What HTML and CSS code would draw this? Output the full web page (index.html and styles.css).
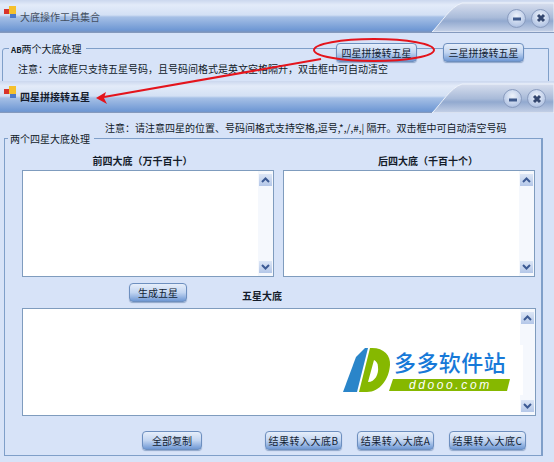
FILE: index.html
```html
<!DOCTYPE html>
<html lang="zh-CN">
<head>
    <meta charset="UTF-8">
    <title>四星拼接转五星</title>
    <link rel="stylesheet" href="styles.css">
</head>
<body>
    <!-- 后面的窗口 -->
    <div class="window back-window">
        <div class="titlebar">
            <svg class="swoosh" width="122" height="32" viewBox="0 0 122 32">
                <path d="M0 32 C10 22 18 7 30 3 L122 3 L122 32 Z" fill="url(#barGrad)" stroke="#eef3fb" stroke-width="1"/>
                <defs>
                    <linearGradient id="barGrad" x1="0" y1="0" x2="0" y2="1">
                        <stop offset="0" stop-color="#d7deee"/>
                        <stop offset="0.5" stop-color="#a9bbd9"/>
                        <stop offset="0.62" stop-color="#92a9cf"/>
                        <stop offset="1" stop-color="#c6d2e8"/>
                    </linearGradient>
                </defs>
            </svg>
            <svg class="app-icon" width="13" height="13" viewBox="0 0 13 13">
                <rect x="0" y="3" width="5" height="5" fill="#d9342b"/>
                <rect x="5" y="0" width="7" height="8" fill="#f5c02c"/>
                <rect x="6" y="8" width="6" height="4" fill="#4c78c8"/>
            </svg>
            <span class="title-text">大底操作工具集合</span>
            <span class="win-btn">
                <svg width="10" height="10" viewBox="0 0 10 10"><path d="M1 6H9" stroke="#3f5a8c" stroke-width="3"/></svg>
            </span>
            <span class="win-btn">
                <svg width="10" height="10" viewBox="0 0 10 10"><path d="M2 2L8 8M8 2L2 8" stroke="#34476f" stroke-width="3"/></svg>
            </span>
        </div>
        <div class="back-body">
            <div class="back-group">
                <span class="legend"><b class="legend-ab">AB</b>两个大底处理</span>
                <p class="back-note">注意：大底框只支持五星号码，且号码间格式是英文空格隔开，双击框中可自动清空</p>
                <div class="back-actions">
                    <button class="btn btn-wide">四星拼接转五星</button>
                    <button class="btn btn-wide">三星拼接转五星</button>
                </div>
            </div>
        </div>
    </div>

    <!-- 前面的窗口 -->
    <div class="window front-window">
        <div class="titlebar front-bar">
            <svg class="swoosh" width="122" height="32" viewBox="0 0 122 32">
                <path d="M0 32 C10 22 18 7 30 3 L122 3 L122 32 Z" fill="url(#barGrad)" stroke="#eef3fb" stroke-width="1"/>
            </svg>
            <svg class="app-icon" width="13" height="13" viewBox="0 0 13 13">
                <rect x="0" y="3" width="5" height="5" fill="#d9342b"/>
                <rect x="5" y="0" width="7" height="8" fill="#f5c02c"/>
                <rect x="6" y="8" width="6" height="4" fill="#4c78c8"/>
            </svg>
            <span class="title-text front-title">四星拼接转五星</span>
            <span class="win-btn">
                <svg width="10" height="10" viewBox="0 0 10 10"><path d="M1 6H9" stroke="#3f5a8c" stroke-width="3"/></svg>
            </span>
            <span class="win-btn">
                <svg width="10" height="10" viewBox="0 0 10 10"><path d="M2 2L8 8M8 2L2 8" stroke="#34476f" stroke-width="3"/></svg>
            </span>
        </div>
        <p class="front-note">注意：请注意四星的位置、号码间格式支持空格,逗号,*,/,#,| 隔开。双击框中可自动清空号码</p>
        <div class="group">
            <span class="legend legend-front">两个四星大底处理</span>
            <div class="box-heads">
                <h3 class="head-left">前四大底（万千百十）</h3>
                <h3 class="head-right">后四大底（千百十个）</h3>
            </div>
            <div class="box-row">
                <div class="box">
                    <div class="scrollbar">
                        <span class="arrow"><svg width="9" height="6" viewBox="0 0 9 6"><path d="M1 5L4.5 1.5L8 5" fill="none" stroke="#3c5a94" stroke-width="2"/></svg></span>
                        <span class="arrow"><svg width="9" height="6" viewBox="0 0 9 6"><path d="M1 1L4.5 4.5L8 1" fill="none" stroke="#3c5a94" stroke-width="2"/></svg></span>
                    </div>
                </div>
                <div class="box">
                    <div class="scrollbar">
                        <span class="arrow"><svg width="9" height="6" viewBox="0 0 9 6"><path d="M1 5L4.5 1.5L8 5" fill="none" stroke="#3c5a94" stroke-width="2"/></svg></span>
                        <span class="arrow"><svg width="9" height="6" viewBox="0 0 9 6"><path d="M1 1L4.5 4.5L8 1" fill="none" stroke="#3c5a94" stroke-width="2"/></svg></span>
                    </div>
                </div>
            </div>
            <div class="mid-row">
                <button class="btn btn-make">生成五星</button>
                <h3>五星大底</h3>
            </div>
            <div class="box box-large">
                <div class="scrollbar">
                    <span class="arrow"><svg width="9" height="6" viewBox="0 0 9 6"><path d="M1 5L4.5 1.5L8 5" fill="none" stroke="#3c5a94" stroke-width="2"/></svg></span>
                    <span class="arrow"><svg width="9" height="6" viewBox="0 0 9 6"><path d="M1 1L4.5 4.5L8 1" fill="none" stroke="#3c5a94" stroke-width="2"/></svg></span>
                </div>
                <div class="logo">
                    <svg width="48" height="46" viewBox="0 0 48 46">
                        <path d="M0 45 L13 10 L22 1 L25 1 L14 45 Z" fill="#2a85c9"/>
                        <path d="M27 1 C40 0 48 8 47 18 C46 32 37 45 24 45 L16 45 Z M31 13 L25 35 C32 35 36 27 35 20 C35 16 33 14 31 13 Z" fill="#86b800" fill-rule="evenodd"/>
                    </svg>
                    <div class="logo-text">
                        <span class="logo-cn">多多软件站</span>
                        <span class="logo-en">ddooo.com</span>
                    </div>
                </div>
            </div>
            <div class="bottom-row">
                <button class="btn btn-copy">全部复制</button>
                <button class="btn btn-result">结果转入大底B</button>
                <button class="btn btn-result">结果转入大底A</button>
                <button class="btn btn-result">结果转入大底C</button>
            </div>
        </div>
    </div>

    <!-- 红色标注 -->
    <svg class="marks" width="554" height="120" viewBox="0 0 554 120">
        <ellipse cx="374" cy="50" rx="60" ry="11" fill="none" stroke="#e4141c" stroke-width="2"/>
        <path d="M321 59 L104 97" stroke="#e4141c" stroke-width="2"/>
        <path d="M96 98 L106 92 L104 98 L107 104 Z" fill="#e4141c"/>
    </svg>
</body>
</html>
```

FILE: styles.css
```css
body {
    margin: 0;
    width: 554px;
    height: 462px;
    position: relative;
    overflow: hidden;
    background: #d7e3f8;
    font-family: "Noto Sans CJK SC", "Liberation Sans", sans-serif;
    font-size: 10px;
    color: #111a28;
}

h3 {
    margin: 0;
    font-size: 10px;
    line-height: 14px;
    font-weight: 700;
    color: #141c2a;
}

.titlebar {
    position: relative;
    display: flex;
    align-items: center;
    height: 33px;
    box-sizing: border-box;
    padding: 0 4px;
    background: linear-gradient(#cbd7ee 0, #e3ebf9 5px, #d3e0f4 15px, #a6c0e6 17px, #6f98d4 30px, #7b94bd 32px);
    border-bottom: 1px solid #8499bd;
}

.swoosh {
    position: absolute;
    top: 0;
    right: 0;
}

.app-icon {
    position: relative;
    margin-top: -8px;
}

.title-text {
    position: relative;
    flex: 1;
    margin-left: 3px;
    font-size: 10px;
    color: #434e60;
}

.front-title {
    font-weight: 700;
    color: #141b2b;
}

.win-btn {
    position: relative;
    display: flex;
    align-items: center;
    justify-content: center;
    width: 19px;
    height: 19px;
    margin: 4px 0 0 5px;
    border: 1px solid #8a9cbf;
    border-radius: 50%;
    box-sizing: border-box;
    background: radial-gradient(circle at 50% 35%, #eef3fb, #b7c8e6 70%, #8fa7d2);
}

/* 后面的窗口 */
.back-window {
    height: 81px;
    overflow: hidden;
}

.back-body {
    padding: 15px 0 0 2px;
}

.back-group {
    position: relative;
    height: 60px;
    margin-right: 5px;
    border: 1px solid #7f9fc9;
    border-radius: 3px 0 0 0;
    box-sizing: border-box;
    padding: 12px 0 0 15px;
}

.legend {
    position: absolute;
    top: -7px;
    left: 6px;
    padding: 0 4px 0 2px;
    background: #d7e3f8;
    font-size: 10px;
    line-height: 14px;
}

.legend-ab {
    font-size: 8px;
}

.back-note {
    margin: 0;
    font-size: 10px;
    line-height: 16px;
}

.back-actions {
    position: absolute;
    top: -6px;
    right: 24px;
    display: flex;
    gap: 26px;
}

/* 前面的窗口 */
.front-window {
    height: 381px;
}

.front-bar {
    height: 32px;
    padding-right: 8px;
}

.front-note {
    margin: 0;
    height: 25px;
    padding: 7px 0 0 105px;
    box-sizing: border-box;
    font-size: 10px;
    line-height: 16px;
    white-space: nowrap;
}

.group {
    position: relative;
    width: 539px;
    height: 318px;
    margin-left: 4px;
    box-sizing: border-box;
    border: 1px solid #7f9fc9;
    border-right-width: 2px;
    padding: 15px 0 0 17px;
}

.legend-front {
    left: 3px;
}

.box-heads {
    display: flex;
    gap: 9px;
    text-align: center;
}

.box-heads h3 {
    width: 252px;
    box-sizing: border-box;
}

.box-heads .head-left {
    padding-right: 11px;
}

.box-heads .head-right {
    padding-left: 38px;
}

.box-row {
    display: flex;
    gap: 9px;
    margin-top: 2px;
}

.box {
    position: relative;
    width: 252px;
    height: 107px;
    box-sizing: border-box;
    border: 1px solid #7f9cbe;
    background: #fff;
}

.box-large {
    width: 514px;
    height: 108px;
}

.scrollbar {
    position: absolute;
    top: 0;
    right: 0;
    bottom: 0;
    width: 15px;
    display: flex;
    flex-direction: column;
    justify-content: space-between;
    background: #f5f8fd;
}

.arrow {
    display: flex;
    align-items: center;
    justify-content: center;
    height: 12px;
    margin: 3px 1px;
    background: linear-gradient(#dce6f6, #b4c7e8);
}

.mid-row {
    display: flex;
    align-items: flex-start;
    height: 31px;
    padding: 6px 0 0 107px;
    box-sizing: border-box;
}

.mid-row h3 {
    margin: 6px 0 0 55px;
}

.btn {
    height: 19px;
    padding: 0;
    border: 1px solid #6d8fbf;
    border-radius: 4px;
    font-family: inherit;
    font-size: 10px;
    line-height: 15px;
    color: #121d33;
    background: linear-gradient(#e6eefa, #c2d5f1 50%, #6f98d4);
    box-shadow: 0 1px 1px #8fa6c9;
}

.btn-wide {
    width: 81px;
}

.btn-make {
    width: 58px;
}

.bottom-row {
    display: flex;
    margin-top: 15px;
    padding-left: 120px;
}

.btn-copy {
    width: 60px;
    margin-right: 63px;
}

.btn-result {
    width: 77px;
    margin-right: 15px;
    letter-spacing: 0.5px;
}

/* 水印 */
.logo {
    position: absolute;
    top: 36px;
    left: 320px;
    width: 180px;
    height: 50px;
    display: flex;
    align-items: center;
    background: #fff;
}

.logo svg {
    flex: none;
}

.logo-text {
    display: flex;
    flex-direction: column;
    margin-left: -2px;
}

.logo-cn {
    height: 30px;
    padding-left: 5px;
    font-size: 22px;
    line-height: 24px;
    font-weight: 500;
    letter-spacing: 0.4px;
    color: #1779d8;
    white-space: nowrap;
}

.logo-en {
    width: 121px;
    height: 12px;
    padding-left: 20px;
    box-sizing: border-box;
    font-family: "Liberation Sans", sans-serif;
    font-size: 12px;
    line-height: 12px;
    font-style: italic;
    letter-spacing: 2.6px;
    color: #fff;
    background: #86b800;
    clip-path: polygon(4px 0, 100% 0, calc(100% - 3px) 100%, 0 100%);
}

.marks {
    position: absolute;
    top: 0;
    left: 0;
}
```
